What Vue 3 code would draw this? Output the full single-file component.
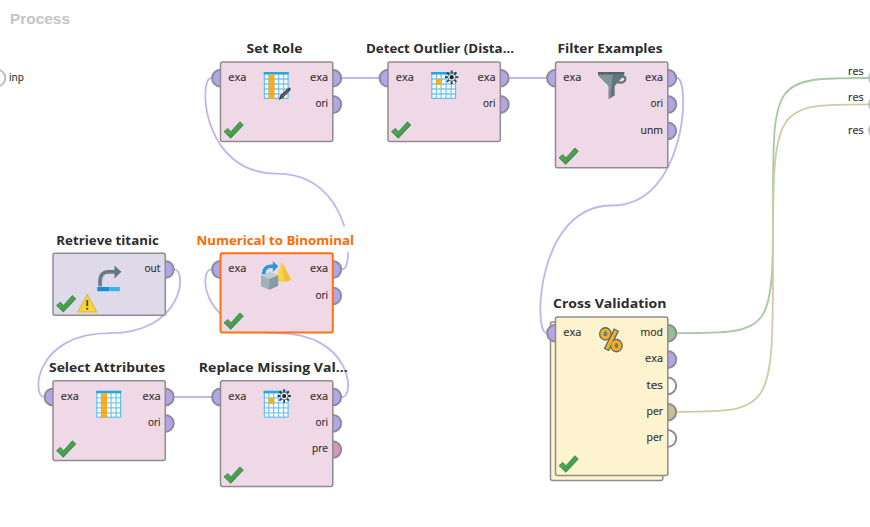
<script setup>
const PURPLE = '#b4a4e9'
const PINK = '#d597bd'
const GREEN = '#93bf92'
const TAN = '#c8be94'
const OPEN = '#ffffff'
const STEP = 26.3

const p = (label, fill = PURPLE, w = 18) => ({ label, fill, w })

const nodes = [
  { title: 'Set Role', tx: 246.5, tw: 56, x: 220.5, y: 62, h: 79.5, fill: '#f0d9e6', icon: 'role', inp: 'exa', out: [p('exa'), p('ori', PURPLE, 12.5)] },
  { title: 'Detect Outlier (Dista...', tx: 366, tw: 148, x: 388, y: 62, h: 79.5, fill: '#f0d9e6', icon: 'burst', inp: 'exa', out: [p('exa'), p('ori', PURPLE, 12.5)] },
  { title: 'Filter Examples', tx: 557.5, tw: 105, x: 555.5, y: 62, h: 105.7, fill: '#f0d9e6', icon: 'filter', inp: 'exa', out: [p('exa'), p('ori', PURPLE, 12.5), p('unm', PURPLE, 22.5)] },
  { title: 'Retrieve titanic', tx: 56.3, tw: 102.5, x: 53, y: 253.3, h: 62, fill: '#dfdaea', icon: 'retrieve', warn: true, out: [p('out', PURPLE, 16)] },
  { title: 'Numerical to Binominal', tx: 196.5, tw: 157.5, x: 220.5, y: 253.3, h: 79.3, fill: '#f0d9e6', icon: 'convert', selected: true, inp: 'exa', out: [p('exa'), p('ori', PURPLE, 12.5)] },
  { title: 'Select Attributes', tx: 49, tw: 116.2, x: 53, y: 380.8, h: 79.7, fill: '#f0d9e6', icon: 'select', inp: 'exa', out: [p('exa'), p('ori', PURPLE, 12.5)] },
  { title: 'Replace Missing Val...', tx: 198.8, tw: 149, x: 220.5, y: 380.8, h: 105.8, fill: '#f0d9e6', icon: 'burst', inp: 'exa', out: [p('exa'), p('ori', PURPLE, 12.5), p('pre', PINK, 16)] },
  { title: 'Cross Validation', tx: 553, tw: 113.5, x: 555.5, y: 317, h: 158.5, fill: '#fdf4cf', icon: 'percent', stacked: true, inp: 'exa', out: [p('mod', GREEN, 22.5), p('exa'), p('tes', OPEN, 16.5), p('per', TAN, 16.5), p('per', OPEN, 16.5)] },
]

const W = 112.3

// Wire that leaves a right port and loops back to a left port further left
function loop(sx, sy, ex, ey) {
  const mx = (sx + ex) / 2
  const my = (sy + ey) / 2
  return `M${sx} ${sy}C${sx + 13.5} ${sy} ${sx + 10} ${my} ${mx} ${my}C${ex - 10} ${my} ${ex - 13.5} ${ey} ${ex} ${ey}`
}
// Wire that runs forward to a result port
function forward(sx, sy, ex, ey) {
  const mx = (sx + ex) / 2
  const my = (sy + ey) / 2
  return `M${sx} ${sy}C${mx} ${sy} ${mx} ${sy} ${mx} ${my}C${mx} ${ey} ${mx} ${ey} ${ex} ${ey}`
}

const wires = [
  { d: loop(174, 269.3, 44.5, 397), c: '#c0b4f1' },
  { d: loop(342, 397, 211.5, 269.3), c: '#c0b4f1' },
  { d: loop(342, 269.3, 211.5, 78), c: '#c0b4f1' },
  { d: loop(677, 78, 546.5, 333), c: '#c0b4f1' },
  { d: 'M342 78H379.5', c: '#c0b4f1' },
  { d: 'M509.5 78H547', c: '#c0b4f1' },
  { d: 'M174.5 397H212', c: '#c0b4f1' },
  { d: forward(677, 333.2, 869, 78), c: '#a2cba3' },
  { d: forward(677, 411.8, 869, 104.3), c: '#d4c9a4' },
]

const results = [
  { y: 78, ty: 75 },
  { y: 104.3, ty: 101 },
  { y: 130.5, ty: 133.7 },
]
</script>

<template>
  <main class="canvas">
    <svg class="scene" viewBox="0 0 870 527" width="870" height="527">
      <defs>
        <linearGradient id="tick" x1="0" y1="0" x2="1" y2="1">
          <stop offset="0" stop-color="#5cb865" /><stop offset="1" stop-color="#318c3d" />
        </linearGradient>
        <g id="i-check">
          <path d="M.5 10.4 4.4 7.2 7.4 10.6 16.4.6 19.8 3.8 7.3 17Z" fill="url(#tick)" stroke="#3c8546" stroke-width=".9" stroke-linejoin="round" />
        </g>
        <g id="i-warn">
          <path d="M10 .8 19.5 18.2H.6Z" fill="#fad632" stroke="#dfbd4a" stroke-width="1.2" stroke-linejoin="round" />
          <path d="M10 6.3V12.4M10 14V16" stroke="#555541" stroke-width="2" />
        </g>
        <g id="i-table">
          <rect width="25" height="27" fill="#fff" />
          <path d="M5.2 2V27M9.9 2V27M14.9 2V27M19.9 2V27M0 7H25M0 12H25M0 17H25M0 22H25" stroke="#77c6f1" stroke-width="1.3" />
          <rect x=".6" y=".6" width="23.8" height="25.8" fill="none" stroke="#5fbdf0" stroke-width="1.2" />
          <rect width="25" height="2.6" fill="#27a6e0" />
        </g>
        <g id="i-select">
          <use href="#i-table" />
          <rect x="5" y="2.3" width="5.8" height="24.7" fill="#f9ae21" />
          <path d="M5 7h5.8M5 12h5.8M5 17h5.8M5 22h5.8" stroke="#e99a12" stroke-width=".6" />
        </g>
        <g id="i-role">
          <use href="#i-select" />
          <path d="M15 28 16.5 23.5 24.6 15.8Q26.8 15 27.2 17.7L18.8 26.3Z" fill="#4c424c" />
          <path d="M18 24.7 25 18" stroke="#897b87" stroke-width="1" />
        </g>
        <g id="i-burst">
          <use href="#i-table" />
          <rect x="4.8" y="7" width="6" height="6" fill="#f9ae21" />
          <circle cx="20.5" cy="5.2" r="5" fill="#fff" opacity=".55" />
          <path d="M20.5-1.5V1.4M20.5 9V12M13.8 5.2H16.7M24.3 5.2H27.2M15.8.5 17.9 2.6M23.1 7.8 25.2 9.9M15.8 9.9 17.9 7.8M23.1 2.6 25.2.5" stroke="#343941" stroke-width="1.8" />
          <circle cx="20.5" cy="5.2" r="2.1" fill="#20252b" />
          <circle cx="20.5" cy="5.2" r="3.9" fill="none" stroke="#565b63" stroke-width=".7" />
        </g>
        <g id="i-filter">
          <path d="M-.7 0H25.5V3L16 14V23.5L10 27V14L-.7 3Z" fill="#61757f" />
          <path d="M-.7 2.5H14L11.5 26.2 10 27V14L-.7 3Z" fill="#82949c" />
          <path d="M-.7 0H25.5V2.4H-.7Z" fill="#506670" />
          <path d="M20.3 5.4Q27.3 3.2 26.6 7.4 25.6 11.6 18.6 10.2" fill="none" stroke="#61757f" stroke-width="2.3" />
        </g>
        <g id="i-retrieve">
          <path d="M3.9 20.5V16Q3.9 6 12.6 6H19" fill="none" stroke="#657985" stroke-width="3.8" />
          <path d="M4.9 20.5V16Q4.9 7.2 12.6 7.2H19" fill="none" stroke="#7d8f99" stroke-width="1" />
          <path d="M18.3-.4 25.2 6 18.3 12.6Z" fill="#647984" />
          <rect x="1.1" y="21.2" width="12" height="4.2" fill="#168ed3" />
          <rect x="13.1" y="21.2" width="10.6" height="4.2" fill="#38b4ee" />
        </g>
        <g id="i-convert">
          <path d="M20.8-1.3 14 17.5Q20 20.5 30 16.2Z" fill="#fad34b" />
          <path d="M20.8-1.3 23.6 18.5Q27.6 18 30 16.2Z" fill="#ecc03c" />
          <path d="M0 12.2 9 9 17.2 12.2V22.5L8.2 26.4 0 23Z" fill="#9fb1ba" />
          <path d="M0 12.2 9 9 17.2 12.2 8.3 15.7Z" fill="#c2ced4" />
          <path d="M8.3 15.7 17.2 12.2V22.5L8.2 26.4Z" fill="#859ca8" />
          <path d="M2.5 10.8Q3 3.4 9.5 2.9H13" fill="none" stroke="#269bd9" stroke-width="3.6" />
          <path d="M11.8-2 17.3 3 11.8 8.7Z" fill="#269bd9" />
        </g>
        <g id="i-percent">
          <g fill="none" stroke="#4c6a72" stroke-width="5.8">
            <ellipse cx="6.7" cy="6.9" rx="3.5" ry="3.9" /><ellipse cx="17.7" cy="18.6" rx="3.5" ry="3.9" /><path d="M17.8 2.6 7.6 23" />
          </g>
          <g fill="none" stroke="#f7ae20" stroke-width="3.2">
            <ellipse cx="6.7" cy="6.9" rx="3.5" ry="3.9" /><ellipse cx="17.7" cy="18.6" rx="3.5" ry="3.9" /><path d="M17.3 3.6 8.1 22" />
          </g>
          <ellipse cx="6.7" cy="6.9" rx="1.5" ry="2" fill="#71837a" /><ellipse cx="17.7" cy="18.6" rx="1.5" ry="2" fill="#71837a" />
        </g>
      </defs>

      <text class="heading" x="10" y="24" textLength="60" lengthAdjust="spacingAndGlyphs">Process</text>

      <path v-for="(w, i) in wires" :key="i" :d="w.d" :stroke="w.c" class="wire" />
      <rect x="196" y="226.5" width="159" height="25.8" fill="#fff" />

      <circle class="edge" cx="-3" cy="78" r="8.3" />
      <text class="label" x="9" y="81" textLength="14.8" lengthAdjust="spacingAndGlyphs">inp</text>
      <g v-for="r in results" :key="r.y">
        <circle class="edge" cx="877.5" :cy="r.y" r="8.3" />
        <text class="label" x="848" :y="r.ty" textLength="15.7" lengthAdjust="spacingAndGlyphs">res</text>
      </g>

      <g v-for="n in nodes" :key="n.title">
        <text class="title" :class="{ active: n.selected }" :x="n.tx" :y="n.y - 8.7" :textLength="n.tw" lengthAdjust="spacingAndGlyphs">{{ n.title }}</text>
        <rect v-if="n.stacked" class="card" :x="n.x - 5" :y="n.y + 5" :width="W" :height="n.h" rx="2" :fill="n.fill" />
        <g :transform="`translate(${n.x} ${n.y + 16.2})`">
          <path v-if="n.inp" class="port" d="M0-8.4A8.4 8.4 0 0 0 0 8.4" :fill="PURPLE" />
          <path v-for="(o, i) in n.out" :key="i" class="port" :d="`M${W} ${i * STEP - 8.4}a8.4 8.4 0 0 1 0 16.8`" :fill="o.fill" />
        </g>
        <rect class="card" :class="{ active: n.selected }" :x="n.x" :y="n.y" :width="W" :height="n.h" rx="2" :fill="n.fill" />
        <text v-if="n.inp" class="label" :x="n.x + 7.8" :y="n.y + 19" textLength="18" lengthAdjust="spacingAndGlyphs">{{ n.inp }}</text>
        <text v-for="(o, i) in n.out" :key="i" class="label" :x="n.x + 107.5 - o.w" :y="n.y + 19 + i * STEP" :textLength="o.w" lengthAdjust="spacingAndGlyphs">{{ o.label }}</text>
        <use :href="`#i-${n.icon}`" :transform="`translate(${n.x + (n.icon === 'convert' ? 40.5 : 43.2)} ${n.y + (n.icon === 'retrieve' ? 12.5 : 10)})`" />
        <use href="#i-check" :transform="`translate(${n.x + 3} ${n.y + n.h - 20.3})`" />
        <use v-if="n.warn" href="#i-warn" :transform="`translate(${n.x + 24.2} ${n.y + n.h - 21.6})`" />
      </g>
    </svg>
  </main>
</template>

<style>
body {
  margin: 0;
  background: #fff;
}
</style>

<style scoped>
.canvas {
  width: 870px;
  height: 527px;
  overflow: hidden;
  background: #fff;
}
.scene {
  display: block;
}
.heading {
  font: 700 15.5px "Liberation Sans", sans-serif;
  fill: #c4c4c4;
}
.title {
  font: 700 13px "Open Sans", "Noto Sans", sans-serif;
  fill: #2c2c2c;
}
.title.active {
  fill: #ff6a00;
}
.label {
  font: 400 11px "Open Sans", "Noto Sans", sans-serif;
  fill: #2b2b2b;
  stroke: #2b2b2b;
  stroke-width: 0.15;
}
.wire {
  fill: none;
  stroke-width: 1.8;
}
.card {
  stroke: #8e8c8e;
  stroke-width: 1.5;
}
.card.active {
  stroke: #ff7112;
  stroke-width: 2;
}
.port {
  stroke: #8e8c90;
  stroke-width: 2;
}
.edge {
  fill: #fff;
  stroke: #bdbdbd;
  stroke-width: 2;
}
</style>
